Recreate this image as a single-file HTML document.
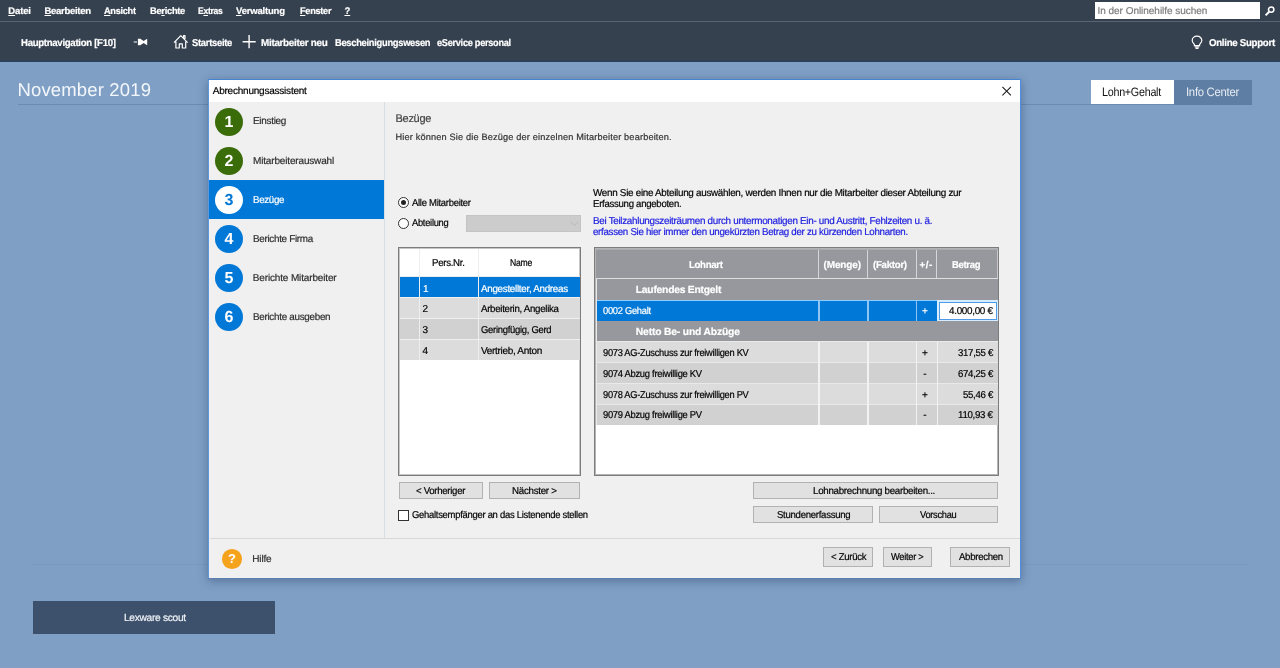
<!DOCTYPE html>
<html lang="de">
<head>
<meta charset="utf-8">
<title>Abrechnungsassistent</title>
<style>
*{box-sizing:border-box;margin:0;padding:0}
html,body{width:1280px;height:668px;overflow:hidden}
body{background:#7f9fc5;font-family:"Liberation Sans","DejaVu Sans",sans-serif;font-size:10px;color:#000;position:relative}
div,svg{position:absolute}
.x{position:absolute;white-space:nowrap;line-height:1;text-rendering:geometricPrecision;transform-origin:0 50%;display:block}
.k{-webkit-text-stroke:0.2px currentColor}
.x u{text-decoration:underline;text-underline-offset:1px}
.btn{border:1px solid #b2b2b2;background:#e1e1e1}
.c{width:27.8px;height:27.8px;border-radius:50%;left:214.7px;color:#fff;font-weight:bold;font-size:16px;text-align:center;line-height:30.4px;will-change:transform;text-rendering:geometricPrecision}
.g{background:#3b6c0a}.b{background:#0078d7}
.lr{left:399.7px;width:180px;height:19.9px}
.rr{left:596.5px;width:401.7px;height:19.8px}
.o{background:#dcdcdc}.e{background:#d1d1d1}.s{background:#0078d7}.gr{background:#96989e}
.vl{width:1.2px;background:#f2f2f2}
</style>
</head>
<body>
<!-- top bars -->
<div style="left:0;top:0;width:1280px;height:62.3px;background:#36414f"></div>
<div style="left:0;top:21px;width:1280px;height:1px;background:#576375"></div>
<div style="left:0;top:60px;width:1280px;height:2.3px;background:#2d3f59"></div>
<div style="left:1095px;top:2px;width:165px;height:17px;background:#fff"></div>
<svg style="left:1264px;top:5px" width="12" height="12" viewBox="0 0 12 12"><circle cx="7.2" cy="4.6" r="2.7" fill="none" stroke="#fff" stroke-width="1.5"/><path d="M5.2 6.8 L1.6 10.4" stroke="#fff" stroke-width="2"/></svg>
<!-- toolbar icons -->
<svg style="left:133px;top:37px" width="16" height="10" viewBox="0 0 16 10"><path d="M0.7 4.4h3.3v1.2h-3.3z M4.9 1.7h2.4L10.6 3.9 L14.2 1.7 V8.2 L10.6 6.1 L7.3 8.2H4.9z" fill="#fff"/></svg>
<svg style="left:172px;top:33px" width="18" height="17" viewBox="0 0 18 17"><path d="M2 9.6 L8.8 2.6 L15.6 9.6 M3.9 8.6 V15 H7.3 V10.8 H10.3 V15 H13.7 V8.6 M11.6 4.4 V2.6 H13 V6" fill="none" stroke="#fff" stroke-width="1.2" stroke-linejoin="round"/></svg>
<svg style="left:242px;top:34px" width="15" height="15" viewBox="0 0 15 15"><path d="M7.1 1 V14.2 M0.6 7.7 H13.7" stroke="#fff" stroke-width="1.4"/></svg>
<svg style="left:1190px;top:34.5px" width="14" height="15" viewBox="0 0 14 15"><path d="M7 1.2 C4.1 1.2 2.2 3.2 2.2 5.5 C2.2 7.3 3.5 8.2 4.4 9.6 V10.6 H9.6 V9.6 C10.5 8.2 11.8 7.3 11.8 5.5 C11.8 3.2 9.9 1.2 7 1.2z M4.8 12 H9.2 M5.5 13.3 H8.5" fill="none" stroke="#fff" stroke-width="1.2"/></svg>
<!-- page -->
<div style="left:18px;top:104px;width:1234px;height:1px;background:#6c8bb1"></div>
<div style="left:33px;top:564px;width:1215px;height:1px;background:#7998be"></div>
<div style="left:1090.5px;top:80px;width:83.5px;height:24.3px;background:#fff"></div>
<div style="left:1174px;top:80px;width:78px;height:24.5px;background:#5f7ea4"></div>
<div style="left:33px;top:601px;width:242px;height:33.4px;background:#3e516c"></div>
<!-- dialog -->
<div style="left:208.2px;top:79.1px;width:812.8px;height:499.6px;background:#f0f0f0;box-shadow:0 2px 9px 0 rgba(30,50,90,.42)"></div>
<div style="left:208.2px;top:79.1px;width:1px;height:499.6px;background:#5c98dd"></div>
<div style="left:208.2px;top:79.1px;width:812.8px;height:1px;background:#4686d0"></div>
<div style="left:1020px;top:79.1px;width:1px;height:499.6px;background:#4a8fe0"></div>
<div style="left:208.2px;top:577.7px;width:812.8px;height:1px;background:#5d80b2"></div>
<div style="left:209.2px;top:80.1px;width:811.1px;height:21.6px;background:#fff"></div>
<svg style="left:1002px;top:86px" width="10" height="10" viewBox="0 0 10 10"><path d="M0.4 0.9 L8.9 9.4 M8.9 0.9 L0.4 9.4" stroke="#1a1a1a" stroke-width="1.05"/></svg>
<div style="left:384.4px;top:101.5px;width:1px;height:436px;background:#d9dde4"></div>
<div style="left:209.2px;top:180px;width:175px;height:39px;background:#0078d7"></div>
<div class="c g" style="top:107.5px">1</div>
<div class="c g" style="top:146.5px">2</div>
<div class="c" style="top:185.7px;background:#fff;color:#0078d7">3</div>
<div class="c b" style="top:224.7px">4</div>
<div class="c b" style="top:264px">5</div>
<div class="c b" style="top:303px">6</div>
<div style="left:210px;top:537.5px;width:810px;height:1px;background:#d8d8d8"></div>
<div style="left:222.4px;top:549.2px;width:19.6px;height:19.6px;border-radius:50%;background:#f5a21d;color:#fff;font-weight:bold;font-size:12.5px;text-align:center;line-height:20.6px">?</div>
<!-- radios / combo -->
<div style="left:397.5px;top:197.1px;width:11px;height:11px;border:1px solid #333;border-radius:50%;background:#fff"></div>
<div style="left:400.5px;top:200.1px;width:5px;height:5px;border-radius:50%;background:#222"></div>
<div style="left:397.5px;top:218px;width:11px;height:11px;border:1px solid #333;border-radius:50%;background:#fff"></div>
<div style="left:466.3px;top:214.8px;width:115px;height:17px;background:#cccccc;border:1px solid #c4c4c4"></div>
<svg style="left:569.5px;top:221px" width="9" height="6" viewBox="0 0 9 6"><path d="M0.5 0.7 L4.3 4.5 L8.1 0.7" fill="none" stroke="#b9b9b9" stroke-width="1"/></svg>
<!-- left table -->
<div style="left:398px;top:247px;width:183px;height:229px;background:#fff;border:1px solid #7c7c7c;box-shadow:inset 0 0 0 1px #c6c6c6"></div>
<div style="left:399.7px;top:277.2px;width:180px;height:82.5px;background:#efefef"></div>
<div style="left:399.5px;top:276.3px;width:180.5px;height:1px;background:#ececec"></div>
<div class="lr s" style="top:277.2px"></div>
<div class="lr o" style="top:298.3px"></div>
<div class="lr e" style="top:319px"></div>
<div class="lr o" style="top:339.8px"></div>
<div class="vl" style="left:419.2px;top:249px;width:1px;height:111px;background:#eee"></div>
<div class="vl" style="left:478.2px;top:249px;width:1px;height:111px;background:#eee"></div>
<!-- right table -->
<div style="left:594px;top:247px;width:405px;height:229px;background:#fff;border:1px solid #7c7c7c;box-shadow:inset 0 0 0 1px #b4b4b4"></div>
<div style="left:596px;top:278.5px;width:402.2px;height:146.4px;background:#e9e9e9"></div>
<div class="gr" style="left:596px;top:249px;width:402px;height:29px"></div>
<div class="gr rr" style="top:279px;height:20.8px"></div>
<div class="rr" style="top:299.9px;height:1.3px;background:#8ccfff"></div>
<div class="rr s" style="top:301.1px;height:19.5px"></div>
<div class="gr rr" style="top:321.4px;height:19.8px"></div>
<div class="rr o" style="top:342.3px"></div>
<div class="rr e" style="top:363.2px"></div>
<div class="rr o" style="top:384px"></div>
<div class="rr e" style="top:405px"></div>
<div style="left:596px;top:278.2px;width:402px;height:1px;background:#dedede"></div>
<div class="vl" style="left:818.2px;top:249px;height:29px;background:#d6d6da"></div>
<div class="vl" style="left:867.2px;top:249px;height:29px;background:#d6d6da"></div>
<div class="vl" style="left:915.8px;top:249px;height:29px;background:#d6d6da"></div>
<div class="vl" style="left:936.3px;top:249px;height:29px;background:#d6d6da"></div>
<div class="vl" style="left:997px;top:249px;height:29px;width:1px;background:#c8c8cc"></div>
<div style="left:596px;top:249px;width:402px;height:1px;background:#a9abb0"></div>
<div class="vl" style="left:818.4px;top:300.8px;height:19.8px;background:#8fc4f3"></div>
<div class="vl" style="left:867.4px;top:300.8px;height:19.8px;background:#8fc4f3"></div>
<div class="vl" style="left:916px;top:300.8px;height:19.8px;background:#8fc4f3"></div>
<div class="vl" style="left:818.4px;top:342.3px;height:82.5px"></div>
<div class="vl" style="left:867.4px;top:342.3px;height:82.5px"></div>
<div class="vl" style="left:916px;top:342.3px;height:82.5px"></div>
<div class="vl" style="left:936.6px;top:342.3px;height:82.5px"></div>
<div style="left:937px;top:300px;width:61.2px;height:20.8px;background:#d6ecff"></div>
<div style="left:939px;top:302px;width:58px;height:18px;background:#fff;border:1px solid #4d9ae6"></div>
<!-- buttons -->
<div class="btn" style="left:398.6px;top:482px;width:84.4px;height:17px"></div>
<div class="btn" style="left:489px;top:482px;width:91px;height:17px"></div>
<div style="left:398px;top:510.2px;width:10.8px;height:10.8px;border:1px solid #333;background:#fff"></div>
<div class="btn" style="left:753px;top:482.4px;width:245px;height:16.8px"></div>
<div class="btn" style="left:753px;top:506.3px;width:119.8px;height:17.2px"></div>
<div class="btn" style="left:879px;top:506.3px;width:119px;height:17.2px"></div>
<div class="btn" style="left:823px;top:547.4px;width:50px;height:19.4px"></div>
<div class="btn" style="left:883px;top:547.4px;width:49px;height:19.4px"></div>
<div class="btn" style="left:950.3px;top:547.4px;width:59.4px;height:19.4px"></div>
<!-- text -->
<div id="txt" style="left:0;top:0;width:1280px;height:668px;will-change:transform">
<span class="x k" style="left:8.3px;top:7px;font-size:9.5px;font-weight:bold;color:#fff;letter-spacing:-0.13px;"><u>D</u>atei</span>
<span class="x k" style="left:44.5px;top:7px;font-size:9.5px;font-weight:bold;color:#fff;letter-spacing:-0.29px;"><u>B</u>earbeiten</span>
<span class="x k" style="left:104.0px;top:7px;font-size:9.5px;font-weight:bold;color:#fff;letter-spacing:-0.30px;transform:scaleX(0.968);"><u>A</u>nsicht</span>
<span class="x k" style="left:149.7px;top:7px;font-size:9.5px;font-weight:bold;color:#fff;letter-spacing:-0.30px;transform:scaleX(0.983);">Be<u>r</u>ichte</span>
<span class="x k" style="left:197.7px;top:7px;font-size:9.5px;font-weight:bold;color:#fff;letter-spacing:-0.30px;transform:scaleX(0.900);">E<u>x</u>tras</span>
<span class="x k" style="left:236.0px;top:7px;font-size:9.5px;font-weight:bold;color:#fff;letter-spacing:-0.19px;"><u>V</u>erwaltung</span>
<span class="x k" style="left:299.5px;top:7px;font-size:9.5px;font-weight:bold;color:#fff;letter-spacing:-0.30px;transform:scaleX(0.968);"><u>F</u>enster</span>
<span class="x k" style="left:344.4px;top:7px;font-size:9.5px;font-weight:bold;color:#fff;"><u>?</u></span>
<span class="x k" style="left:1097.5px;top:7px;font-size:10px;color:#7c7c7c;letter-spacing:-0.03px;">In der Onlinehilfe suchen</span>
<span class="x k" style="left:21.0px;top:39px;font-size:10px;font-weight:bold;color:#fff;letter-spacing:-0.30px;transform:scaleX(0.959);">Hauptnavigation [F10]</span>
<span class="x k" style="left:192.0px;top:39px;font-size:10px;font-weight:bold;color:#fff;letter-spacing:-0.30px;transform:scaleX(0.940);">Startseite</span>
<span class="x k" style="left:261.0px;top:39px;font-size:10px;font-weight:bold;color:#fff;letter-spacing:-0.30px;transform:scaleX(0.988);">Mitarbeiter neu</span>
<span class="x k" style="left:334.7px;top:39px;font-size:10px;font-weight:bold;color:#fff;letter-spacing:-0.30px;transform:scaleX(0.933);">Bescheinigungswesen</span>
<span class="x k" style="left:437.3px;top:39px;font-size:10px;font-weight:bold;color:#fff;letter-spacing:-0.30px;transform:scaleX(0.917);">eService personal</span>
<span class="x k" style="left:1209.4px;top:39px;font-size:10px;font-weight:bold;color:#fff;letter-spacing:-0.30px;transform:scaleX(0.969);">Online Support</span>
<span class="x" style="left:17.5px;top:81px;font-size:18.5px;color:#f3f6fa;letter-spacing:0.15px;">November 2019</span>
<span class="x" style="left:1102.3px;top:86px;font-size:12.2px;color:#111;letter-spacing:-0.30px;transform:scaleX(0.882);">Lohn+Gehalt</span>
<span class="x" style="left:1186.3px;top:86px;font-size:12.2px;color:#e6ecf4;letter-spacing:-0.30px;transform:scaleX(0.928);">Info Center</span>
<span class="x k" style="left:123.5px;top:614px;font-size:10.3px;color:#eef2f7;letter-spacing:-0.30px;transform:scaleX(0.989);">Lexware scout</span>
<span class="x k" style="left:212.7px;top:87px;font-size:10px;letter-spacing:-0.22px;">Abrechnungsassistent</span>
<span class="x k" style="left:253.0px;top:117px;font-size:10px;color:#2e2e2e;letter-spacing:-0.30px;transform:scaleX(0.995);">Einstieg</span>
<span class="x k" style="left:253.0px;top:157px;font-size:10px;color:#2e2e2e;letter-spacing:-0.16px;">Mitarbeiterauswahl</span>
<span class="x k" style="left:252.8px;top:196px;font-size:10px;color:#fff;letter-spacing:-0.30px;transform:scaleX(0.972);">Bezüge</span>
<span class="x k" style="left:252.8px;top:235px;font-size:10px;color:#2e2e2e;letter-spacing:-0.30px;transform:scaleX(0.985);">Berichte Firma</span>
<span class="x k" style="left:252.8px;top:274px;font-size:10px;color:#2e2e2e;letter-spacing:-0.15px;">Berichte Mitarbeiter</span>
<span class="x k" style="left:252.8px;top:313px;font-size:10px;color:#2e2e2e;letter-spacing:-0.30px;transform:scaleX(0.987);">Berichte ausgeben</span>
<span class="x k" style="left:252.3px;top:555px;font-size:10px;color:#2e2e2e;letter-spacing:-0.18px;">Hilfe</span>
<span class="x k" style="left:395.5px;top:114px;font-size:11px;color:#444;letter-spacing:-0.28px;">Bezüge</span>
<span class="x k" style="left:395.5px;top:133px;font-size:9.2px;color:#333;letter-spacing:0.16px;">Hier können Sie die Bezüge der einzelnen Mitarbeiter bearbeiten.</span>
<span class="x k" style="left:412.0px;top:199px;font-size:10px;letter-spacing:-0.30px;transform:scaleX(0.949);">Alle Mitarbeiter</span>
<span class="x k" style="left:412.0px;top:219px;font-size:10px;letter-spacing:-0.30px;transform:scaleX(0.934);">Abteilung</span>
<span class="x k" style="left:593.3px;top:189px;font-size:10px;letter-spacing:-0.30px;transform:scaleX(0.987);">Wenn Sie eine Abteilung auswählen, werden Ihnen nur die Mitarbeiter dieser Abteilung zur</span>
<span class="x k" style="left:593.3px;top:200px;font-size:10px;letter-spacing:-0.30px;transform:scaleX(0.962);">Erfassung angeboten.</span>
<span class="x k" style="left:593.3px;top:217px;font-size:10px;color:#1c1ce0;letter-spacing:-0.30px;transform:scaleX(0.986);">Bei Teilzahlungszeiträumen durch untermonatigen Ein- und Austritt, Fehlzeiten u. ä.</span>
<span class="x k" style="left:593.3px;top:228px;font-size:10px;color:#1c1ce0;letter-spacing:-0.30px;transform:scaleX(0.973);">erfassen Sie hier immer den ungekürzten Betrag der zu kürzenden Lohnarten.</span>
<span class="x k" style="left:432.4px;top:259px;font-size:10px;letter-spacing:-0.30px;transform:scaleX(0.967);">Pers.Nr.</span>
<span class="x k" style="left:509.8px;top:259px;font-size:10px;letter-spacing:-0.30px;transform:scaleX(0.861);">Name</span>
<span class="x k" style="left:423.0px;top:285px;font-size:10px;color:#fff;">1</span>
<span class="x k" style="left:480.9px;top:285px;font-size:10px;color:#fff;letter-spacing:-0.30px;transform:scaleX(0.984);">Angestellter, Andreas</span>
<span class="x k" style="left:422.5px;top:305px;font-size:10px;">2</span>
<span class="x k" style="left:480.9px;top:305px;font-size:10px;letter-spacing:-0.30px;transform:scaleX(0.969);">Arbeiterin, Angelika</span>
<span class="x k" style="left:422.5px;top:326px;font-size:10px;">3</span>
<span class="x k" style="left:480.9px;top:326px;font-size:10px;letter-spacing:-0.30px;transform:scaleX(0.945);">Geringfügig, Gerd</span>
<span class="x k" style="left:422.5px;top:347px;font-size:10px;">4</span>
<span class="x k" style="left:480.9px;top:347px;font-size:10px;letter-spacing:-0.30px;">Vertrieb, Anton</span>
<span class="x k" style="left:689.0px;top:261px;font-size:10px;font-weight:bold;color:#fff;letter-spacing:-0.30px;transform:scaleX(0.957);">Lohnart</span>
<span class="x k" style="left:823.6px;top:261px;font-size:10px;font-weight:bold;color:#fff;letter-spacing:-0.16px;">(Menge)</span>
<span class="x k" style="left:873.3px;top:261px;font-size:10px;font-weight:bold;color:#fff;letter-spacing:-0.30px;transform:scaleX(0.971);">(Faktor)</span>
<span class="x k" style="left:919.4px;top:261px;font-size:10px;font-weight:bold;color:#fff;letter-spacing:0.47px;">+/-</span>
<span class="x k" style="left:951.5px;top:261px;font-size:10px;font-weight:bold;color:#fff;letter-spacing:-0.30px;transform:scaleX(0.944);">Betrag</span>
<span class="x k" style="left:635.8px;top:286px;font-size:10.3px;font-weight:bold;color:#fff;letter-spacing:-0.23px;">Laufendes Entgelt</span>
<span class="x k" style="left:603.2px;top:307px;font-size:10px;color:#fff;letter-spacing:-0.30px;transform:scaleX(0.934);">0002 Gehalt</span>
<span class="x k" style="left:922.0px;top:307px;font-size:10px;color:#fff;">+</span>
<span class="x k" style="left:949.0px;top:307px;font-size:10px;letter-spacing:-0.30px;transform:scaleX(0.987);">4.000,00 €</span>
<span class="x k" style="left:635.8px;top:328px;font-size:10.3px;font-weight:bold;color:#fff;letter-spacing:-0.16px;">Netto Be- und Abzüge</span>
<span class="x k" style="left:603.2px;top:349px;font-size:10px;letter-spacing:-0.30px;transform:scaleX(0.930);">9073 AG-Zuschuss zur freiwilligen KV</span>
<span class="x k" style="left:922.0px;top:349px;font-size:10px;">+</span>
<span class="x k" style="left:957.6px;top:349px;font-size:10px;letter-spacing:-0.30px;transform:scaleX(0.961);">317,55 €</span>
<span class="x k" style="left:603.2px;top:370px;font-size:10px;letter-spacing:-0.30px;transform:scaleX(0.938);">9074 Abzug freiwillige KV</span>
<span class="x k" style="left:923.3px;top:370px;font-size:10px;">-</span>
<span class="x k" style="left:957.6px;top:370px;font-size:10px;letter-spacing:-0.30px;transform:scaleX(0.961);">674,25 €</span>
<span class="x k" style="left:603.2px;top:391px;font-size:10px;letter-spacing:-0.30px;transform:scaleX(0.930);">9078 AG-Zuschuss zur freiwilligen PV</span>
<span class="x k" style="left:922.0px;top:391px;font-size:10px;">+</span>
<span class="x k" style="left:962.7px;top:391px;font-size:10px;letter-spacing:-0.30px;transform:scaleX(0.960);">55,46 €</span>
<span class="x k" style="left:603.2px;top:411px;font-size:10px;letter-spacing:-0.30px;transform:scaleX(0.938);">9079 Abzug freiwillige PV</span>
<span class="x k" style="left:923.3px;top:411px;font-size:10px;">-</span>
<span class="x k" style="left:958.0px;top:411px;font-size:10px;letter-spacing:-0.30px;transform:scaleX(0.970);">110,93 €</span>
<span class="x k" style="left:415.7px;top:487px;font-size:10px;letter-spacing:-0.30px;transform:scaleX(0.960);">&lt; Vorheriger</span>
<span class="x k" style="left:512.2px;top:487px;font-size:10px;letter-spacing:-0.30px;transform:scaleX(0.977);">Nächster &gt;</span>
<span class="x k" style="left:412.0px;top:511px;font-size:10px;letter-spacing:-0.30px;transform:scaleX(0.946);">Gehaltsempfänger an das Listenende stellen</span>
<span class="x k" style="left:813.0px;top:487px;font-size:10px;letter-spacing:-0.30px;transform:scaleX(0.976);">Lohnabrechnung bearbeiten...</span>
<span class="x k" style="left:776.7px;top:511px;font-size:10px;letter-spacing:-0.30px;transform:scaleX(0.960);">Stundenerfassung</span>
<span class="x k" style="left:920.0px;top:511px;font-size:10px;letter-spacing:-0.30px;transform:scaleX(0.929);">Vorschau</span>
<span class="x k" style="left:830.6px;top:553px;font-size:10px;letter-spacing:-0.30px;transform:scaleX(0.960);">&lt; Zurück</span>
<span class="x k" style="left:891.3px;top:553px;font-size:10px;letter-spacing:-0.30px;transform:scaleX(0.928);">Weiter &gt;</span>
<span class="x k" style="left:958.6px;top:553px;font-size:10px;letter-spacing:-0.30px;transform:scaleX(0.961);">Abbrechen</span>
</div>
</body>
</html>
